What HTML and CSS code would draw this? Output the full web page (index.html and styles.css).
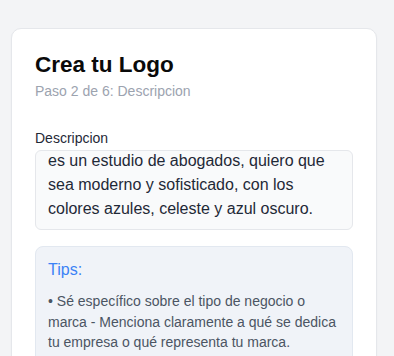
FILE: index.html
```html
<!DOCTYPE html>
<html lang="es">
<head>
<meta charset="utf-8">
<title>Crea tu Logo</title>
<link rel="stylesheet" href="styles.css">
</head>
<body>
<main class="page">
  <section class="card">
    <header class="card-header">
      <h1 class="title">Crea tu Logo</h1>
      <p class="subtitle">Paso 2 de 6: Descripcion</p>
    </header>
    <div class="field">
      <label class="label" for="desc">Descripcion</label>
      <textarea id="desc" class="textarea" rows="3">es un estudio de abogados, quiero que sea moderno y sofisticado, con los colores azules, celeste y azul oscuro.</textarea>
    </div>
    <aside class="tips">
      <h3 class="tips-title">Tips:</h3>
      <p class="tip">• Sé específico sobre el tipo de negocio o marca - Menciona claramente a qué se dedica tu empresa o qué representa tu marca.</p>
    </aside>
  </section>
</main>
<script src="script.js"></script>
</body>
</html>
```
FILE: styles.css
```css
* { box-sizing: border-box; }
html, body { margin: 0; }
body {
  background: #f3f4f6;
  font-family: "Liberation Sans", Arial, sans-serif;
  color: #111827;
}
.page {
  padding: 28px 17px 0 11px;
}
.card {
  background: #ffffff;
  border: 1px solid #e5e7eb;
  border-radius: 10px;
  box-shadow: 0 1px 2px rgba(0, 0, 0, 0.04);
  padding: 23px 23px 40px;
}
.card-header {
  margin-bottom: 27px;
}
.title {
  margin: 0;
  font-size: 22.5px;
  line-height: 25px;
  font-weight: 700;
  color: #0a0a0a;
}
.subtitle {
  margin: 4px 0 0;
  font-size: 14px;
  line-height: 20px;
  color: #9ca3af;
}
.field {
  display: flex;
  flex-direction: column;
}
.label {
  font-size: 14px;
  line-height: 20px;
  color: #1f2937;
  margin-bottom: 2px;
}
.textarea {
  display: block;
  width: 100%;
  height: 80px;
  margin: 0;
  padding: 8px 12px;
  border: 1px solid #e5e7eb;
  border-radius: 6px;
  background: #f9fafb;
  font-family: "Liberation Sans", Arial, sans-serif;
  font-size: 16px;
  line-height: 24px;
  color: #1f2937;
  overflow: hidden;
  resize: none;
  outline: none;
}
.tips {
  margin-top: 16px;
  background: #f0f3f8;
  border: 1px solid #e2e8f0;
  border-radius: 8px;
  padding: 12px 12px 12px;
}
.tips-title {
  margin: 0 0 10px;
  font-size: 16px;
  line-height: 22px;
  font-weight: 400;
  color: #3b82f6;
}
.tip {
  margin: 0;
  font-size: 14px;
  line-height: 20.5px;
  color: #4b5563;
}
```
FILE: script.js
```js
document.querySelectorAll('.textarea').forEach(function (t) {
  t.scrollTop = t.scrollHeight;
});
```
